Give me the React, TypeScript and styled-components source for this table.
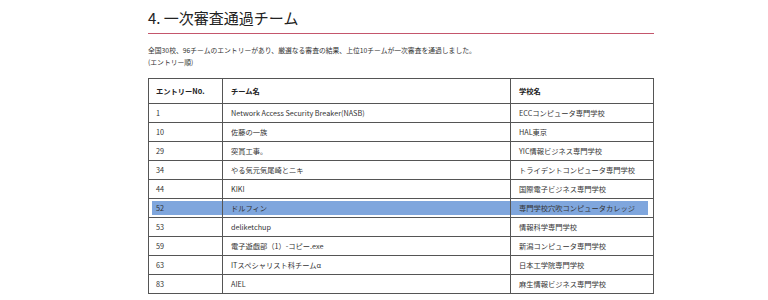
import React from 'react';
import styled, { createGlobalStyle } from 'styled-components';

const GlobalStyle = createGlobalStyle`
  body {
    margin: 0;
    background: #fff;
    font-family: "Noto Sans CJK JP", "Noto Sans", sans-serif;
    color: #333;
  }
`;

const entries = [
  { no: '1', team: 'Network Access Security Breaker(NASB)', school: 'ECCコンピュータ専門学校' },
  { no: '10', team: '佐藤の一族', school: 'HAL東京' },
  { no: '29', team: '突貫工事。', school: 'YIC情報ビジネス専門学校' },
  { no: '34', team: 'やる気元気尾崎とニキ', school: 'トライデントコンピュータ専門学校' },
  { no: '44', team: 'KIKI', school: '国際電子ビジネス専門学校' },
  { no: '52', team: 'ドルフィン', school: '専門学校穴吹コンピュータカレッジ', selected: true },
  { no: '53', team: 'deliketchup', school: '情報科学専門学校' },
  { no: '59', team: '電子遊戯部（1）-コピー.exe', school: '新潟コンピュータ専門学校' },
  { no: '63', team: 'ITスペシャリスト科チームα', school: '日本工学院専門学校' },
  { no: '83', team: 'AIEL', school: '麻生情報ビジネス専門学校' },
];

const App: React.FC = () => {
  return (
    <Section>
      <GlobalStyle />
      <Heading>4. 一次審査通過チーム</Heading>
      <Lead>全国30校、96チームのエントリーがあり、厳選なる審査の結果、上位10チームが一次審査を通過しました。</Lead>
      <Lead>(エントリー順)</Lead>
      <Table>
        <thead>
          <tr>
            <th className="no">エントリーNo.</th>
            <th className="team">チーム名</th>
            <th className="school">学校名</th>
          </tr>
        </thead>
        <tbody>
          {entries.map((e) => (
            <Row key={e.no} $selected={!!e.selected}>
              <td>{e.no}</td>
              <td>{e.team}</td>
              <td>{e.school}</td>
            </Row>
          ))}
        </tbody>
      </Table>
    </Section>
  );
};

export default App;

const Section = styled.div`
  width: 506px;
  margin-left: 148px;
  padding-top: 8px;
`;

const Heading = styled.h2`
  margin: 0 0 10px;
  padding-bottom: 6px;
  font-size: 15px;
  font-weight: 400;
  line-height: 19px;
  color: #222;
  border-bottom: 1px solid #c4566c;
`;

const Lead = styled.p`
  margin: 0;
  font-size: 6.8px;
  line-height: 12px;
  color: #333;
`;

const Table = styled.table`
  width: 506px;
  margin-top: 10px;
  border-collapse: collapse;
  table-layout: fixed;
  font-size: 7.25px;
  th,
  td {
    border: 1px solid #555;
    text-align: left;
    padding: 0 8px;
    white-space: nowrap;
  }
  thead tr {
    height: 25px;
  }
  th {
    font-weight: 700;
    color: #222;
  }
  th.no {
    width: 58px;
    padding-left: 7px;
  }
  th.team {
    width: 271px;
  }
  td:first-child {
    padding-left: 7px;
  }
`;

const Row = styled.tr<{ $selected: boolean }>`
  height: 19px;
  > td {
    background: ${(p) => (p.$selected ? '#7fa6dd' : 'transparent')};
    box-shadow: ${(p) =>
      p.$selected ? 'inset 0 2px 0 #fff, inset 0 -2px 0 #fff' : 'none'};
  }
  > td:first-child {
    box-shadow: ${(p) =>
      p.$selected ? 'inset 3px 0 0 #fff, inset 0 2px 0 #fff, inset 0 -2px 0 #fff' : 'none'};
  }
  > td:last-child {
    box-shadow: ${(p) =>
      p.$selected ? 'inset -5px 0 0 #fff, inset 0 2px 0 #fff, inset 0 -2px 0 #fff' : 'none'};
  }
`;
